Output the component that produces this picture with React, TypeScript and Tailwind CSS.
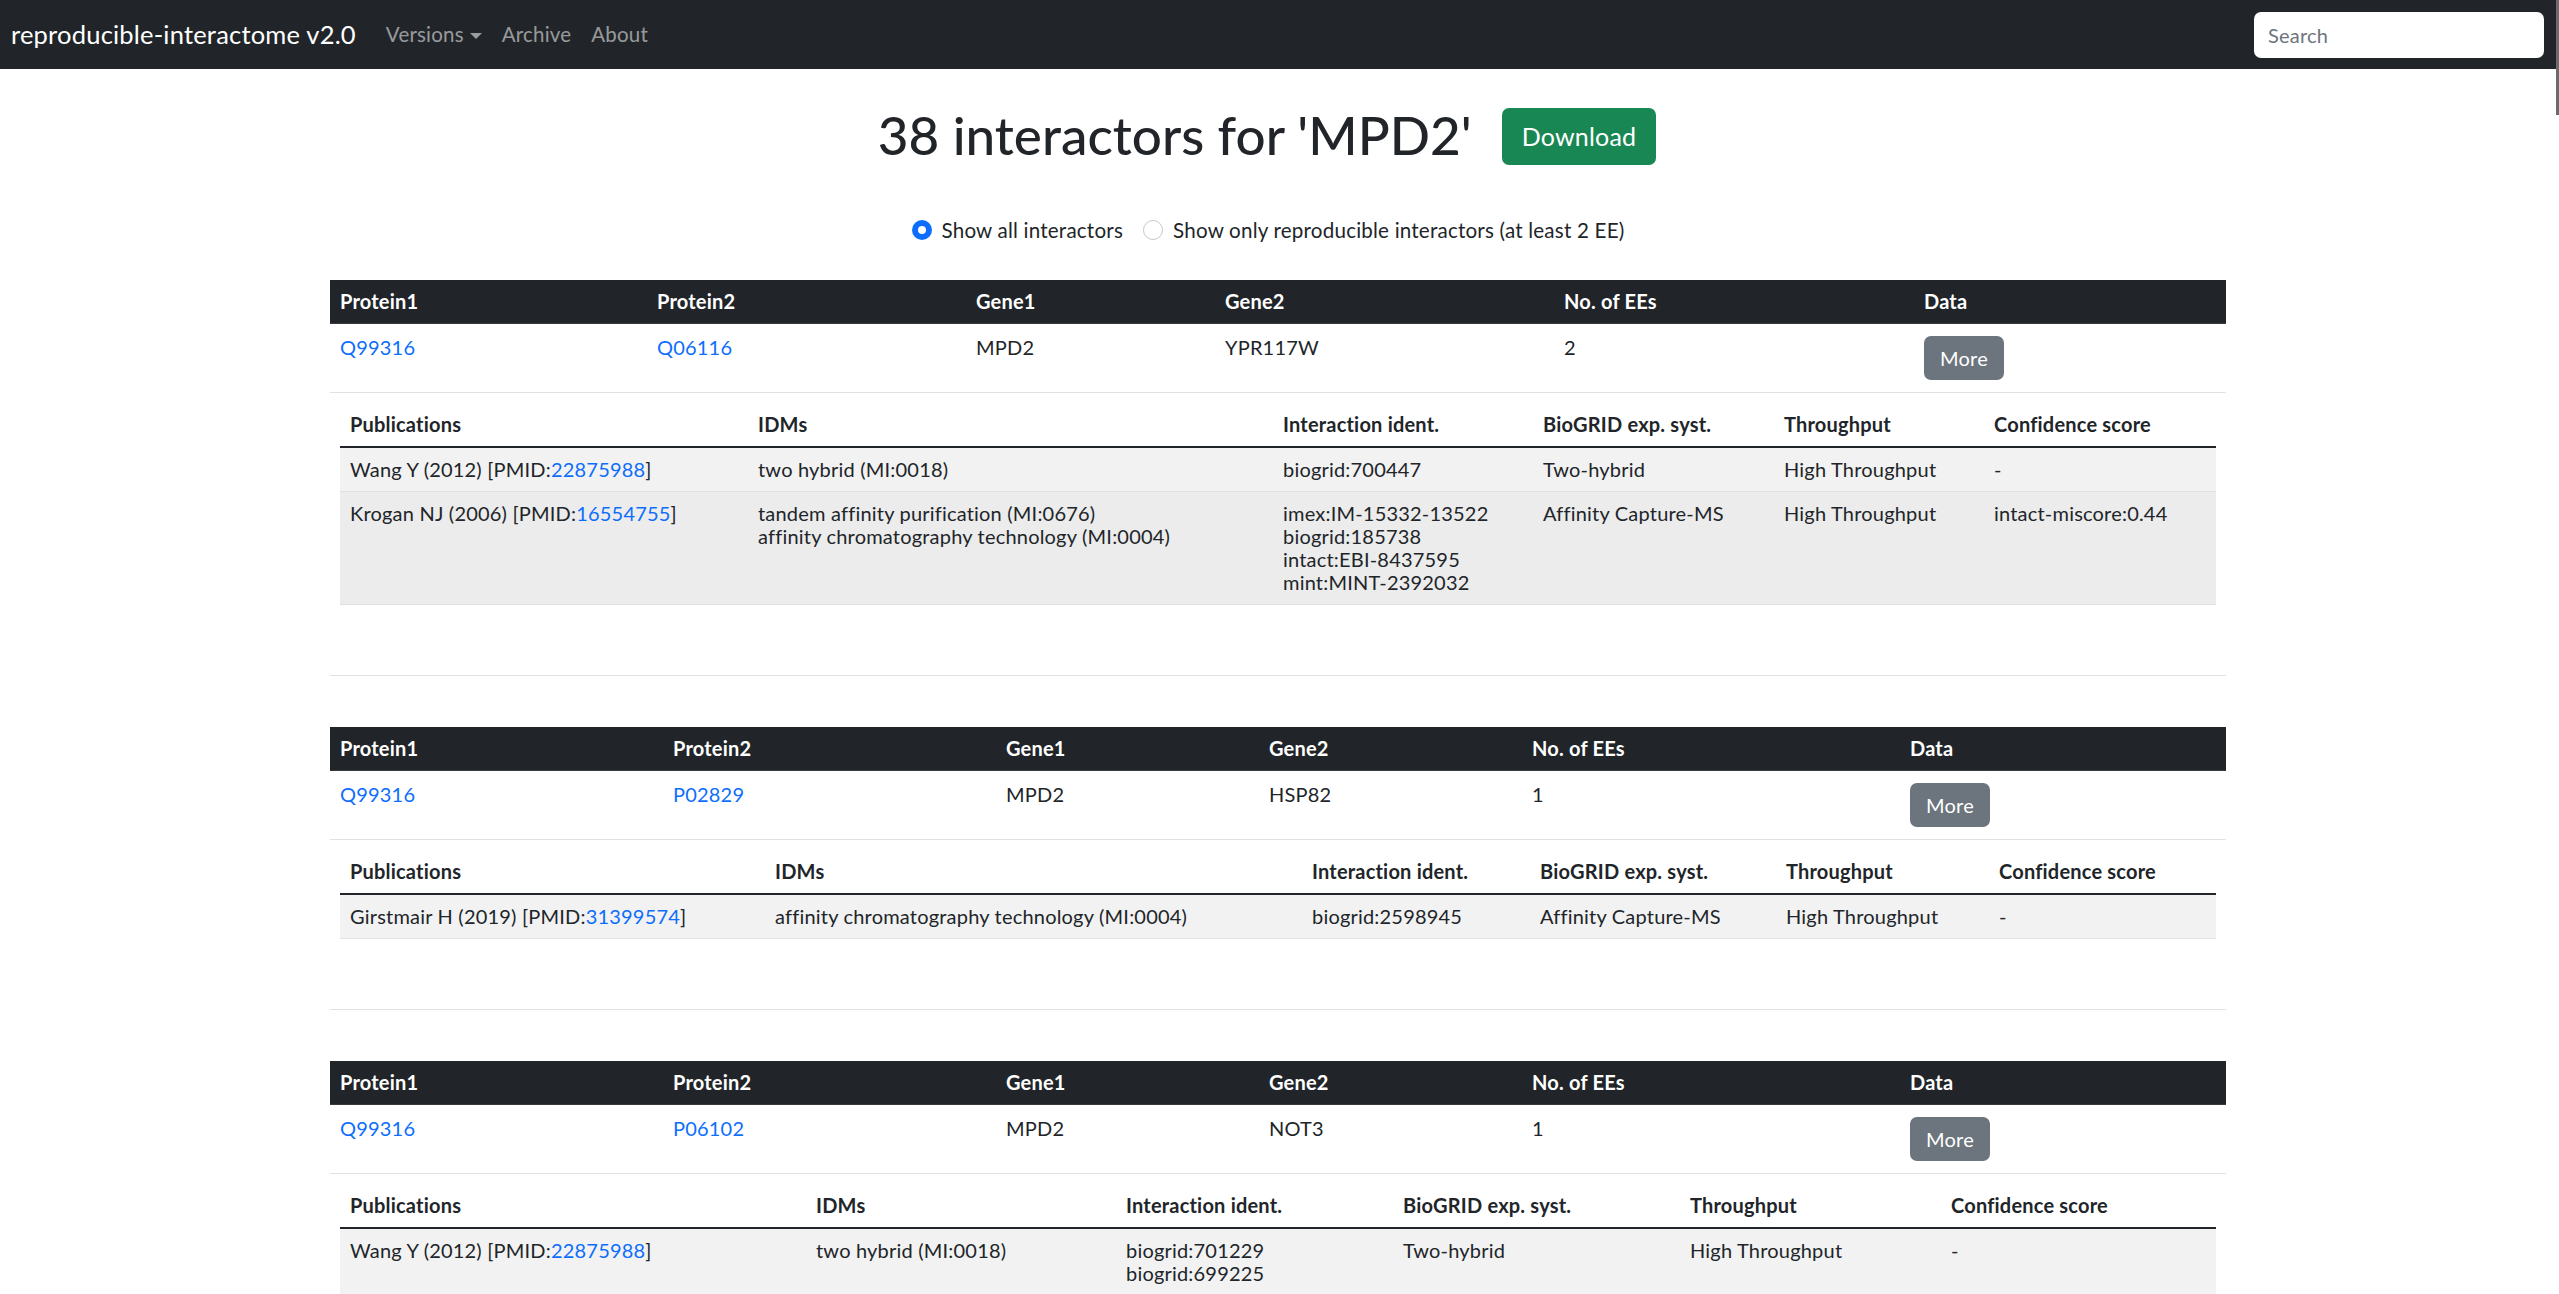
import React from "react";

type InnerRow = {
  pub: string;
  pmid: string;
  idms: string[];
  ids: string[];
  exp: string;
  tp: string;
  conf: string;
  bg: string;
};

type Entry = {
  p1: string;
  p2: string;
  g1: string;
  g2: string;
  ees: string;
  outerCols: string[];
  innerCols: string[];
  rows: InnerRow[];
};

const entries: Entry[] = [
  {
    p1: "Q99316",
    p2: "Q06116",
    g1: "MPD2",
    g2: "YPR117W",
    ees: "2",
    outerCols: ["w-[317px]", "w-[319px]", "w-[249px]", "w-[339px]", "w-[360px]", "w-[312px]"],
    innerCols: ["w-[408px]", "w-[525px]", "w-[260px]", "w-[241px]", "w-[210px]", "w-[232px]"],
    rows: [
      {
        pub: "Wang Y (2012)",
        pmid: "22875988",
        idms: ["two hybrid (MI:0018)"],
        ids: ["biogrid:700447"],
        exp: "Two-hybrid",
        tp: "High Throughput",
        conf: "-",
        bg: "bg-[#f2f2f2]",
      },
      {
        pub: "Krogan NJ (2006)",
        pmid: "16554755",
        idms: ["tandem affinity purification (MI:0676)", "affinity chromatography technology (MI:0004)"],
        ids: ["imex:IM-15332-13522", "biogrid:185738", "intact:EBI-8437595", "mint:MINT-2392032"],
        exp: "Affinity Capture-MS",
        tp: "High Throughput",
        conf: "intact-miscore:0.44",
        bg: "bg-[#ececec]",
      },
    ],
  },
  {
    p1: "Q99316",
    p2: "P02829",
    g1: "MPD2",
    g2: "HSP82",
    ees: "1",
    outerCols: ["w-[333px]", "w-[333px]", "w-[263px]", "w-[263px]", "w-[378px]", "w-[326px]"],
    innerCols: ["w-[425px]", "w-[537px]", "w-[228px]", "w-[246px]", "w-[213px]", "w-[227px]"],
    rows: [
      {
        pub: "Girstmair H (2019)",
        pmid: "31399574",
        idms: ["affinity chromatography technology (MI:0004)"],
        ids: ["biogrid:2598945"],
        exp: "Affinity Capture-MS",
        tp: "High Throughput",
        conf: "-",
        bg: "bg-[#f2f2f2]",
      },
    ],
  },
  {
    p1: "Q99316",
    p2: "P06102",
    g1: "MPD2",
    g2: "NOT3",
    ees: "1",
    outerCols: ["w-[333px]", "w-[333px]", "w-[263px]", "w-[263px]", "w-[378px]", "w-[326px]"],
    innerCols: ["w-[466px]", "w-[310px]", "w-[277px]", "w-[287px]", "w-[261px]", "w-[275px]"],
    rows: [
      {
        pub: "Wang Y (2012)",
        pmid: "22875988",
        idms: ["two hybrid (MI:0018)"],
        ids: ["biogrid:701229", "biogrid:699225"],
        exp: "Two-hybrid",
        tp: "High Throughput",
        conf: "-",
        bg: "bg-[#f2f2f2]",
      },
    ],
  },
];

const outerHeads = ["Protein1", "Protein2", "Gene1", "Gene2", "No. of EEs", "Data"];
const innerHeads = ["Publications", "IDMs", "Interaction ident.", "BioGRID exp. syst.", "Throughput", "Confidence score"];

function Lines({ items }: { items: string[] }) {
  return (
    <>
      {items.map((t, i) => (
        <div key={i}>{t}</div>
      ))}
    </>
  );
}

function InteractorTable({ e }: { e: Entry }) {
  const tdOuter = "px-[10px] pt-[12px] pb-[12px] align-top leading-[23px] border-b border-[#dee2e6]";
  const tdInner = "px-[10px] py-[10px] align-top leading-[23px] border-b border-[#dee2e6]";
  return (
    <table className="w-[1896px] table-fixed border-collapse mb-[51px]">
      <thead>
        <tr>
          {outerHeads.map((h, i) => (
            <th
              key={h}
              className={`${e.outerCols[i]} bg-[#212529] text-white font-bold text-left px-[10px] py-[10px] leading-[23px] border-b border-[#373b3e]`}
            >
              {h}
            </th>
          ))}
        </tr>
      </thead>
      <tbody>
        <tr>
          <td className={tdOuter}>
            <a className="text-[#0d6efd]" href="#">{e.p1}</a>
          </td>
          <td className={tdOuter}>
            <a className="text-[#0d6efd]" href="#">{e.p2}</a>
          </td>
          <td className={tdOuter}>{e.g1}</td>
          <td className={tdOuter}>{e.g2}</td>
          <td className={tdOuter}>{e.ees}</td>
          <td className={tdOuter}>
            <button className="h-[44px] w-[80px] rounded-[7px] bg-[#6c757d] text-white leading-[30px] text-[20px]">
              More
            </button>
          </td>
        </tr>
        <tr>
          <td colSpan={6} className="px-[10px] pt-[10px] pb-[70px] border-b border-[#dee2e6]">
            <table className="w-full table-fixed border-collapse">
              <thead>
                <tr>
                  {innerHeads.map((h, i) => (
                    <th
                      key={h}
                      className={`${e.innerCols[i]} text-left font-bold px-[10px] py-[10px] leading-[23px] border-b-2 border-[#212529]`}
                    >
                      {h}
                    </th>
                  ))}
                </tr>
              </thead>
              <tbody>
                {e.rows.map((r, i) => (
                  <tr key={i} className={r.bg}>
                    <td className={tdInner}>
                      {r.pub} [PMID:<a className="text-[#0d6efd]" href="#">{r.pmid}</a>]
                    </td>
                    <td className={tdInner}>
                      <Lines items={r.idms} />
                    </td>
                    <td className={tdInner}>
                      <Lines items={r.ids} />
                    </td>
                    <td className={tdInner}>{r.exp}</td>
                    <td className={tdInner}>{r.tp}</td>
                    <td className={tdInner}>{r.conf}</td>
                  </tr>
                ))}
              </tbody>
            </table>
          </td>
        </tr>
      </tbody>
    </table>
  );
}

function Radio({ checked, label }: { checked: boolean; label: string }) {
  return (
    <label className="flex items-center gap-[10px] mr-[20px]">
      {checked ? (
        <span className="flex h-[20px] w-[20px] items-center justify-center rounded-full bg-[#0d6efd]">
          <span className="h-[8px] w-[8px] rounded-full bg-white" />
        </span>
      ) : (
        <span className="h-[20px] w-[20px] rounded-full border border-[#c4c8cc] bg-white" />
      )}
      <span className="text-[20.6px] leading-[30px]">{label}</span>
    </label>
  );
}

export default function App() {
  return (
    <div className="flex min-h-[1294px] w-full bg-white font-['Lato',sans-serif] text-[20px] tracking-[0.2px] text-[#212529]">
      <div className="flex-1 min-w-0">
        <nav className="flex h-[69px] items-center bg-[#212529] pl-[11px] pr-[12px]">
          <span className="mr-[20px] text-[25.5px] text-white">reproducible-interactome v2.0</span>
          <span className="flex items-center gap-[6px] px-[10px] text-[20.5px] text-[rgba(255,255,255,0.55)]">
            Versions
            <span className="mt-[2px] h-0 w-0 border-x-[6px] border-t-[6px] border-x-transparent border-t-[rgba(255,255,255,0.55)]" />
          </span>
          <span className="px-[10px] text-[20.5px] text-[rgba(255,255,255,0.55)]">Archive</span>
          <span className="px-[10px] text-[20.5px] text-[rgba(255,255,255,0.55)]">About</span>
          <div className="flex-1" />
          <div className="flex h-[46px] w-[290px] items-center rounded-[7px] bg-white px-[14px] text-[#6c757d]">
            Search
          </div>
        </nav>

        <main className="flex flex-col items-center">
          <div className="mt-[35px] flex items-center gap-[30px] pr-[22px]">
            <h1 className="text-[53px] font-medium leading-[60px] tracking-normal">38 interactors for 'MPD2'</h1>
            <button className="mt-[4px] h-[57px] rounded-[7px] bg-[#198754] px-[20px] text-[25px] text-white">
              Download
            </button>
          </div>

          <div className="mt-[50px] flex items-center">
            <Radio checked={true} label="Show all interactors" />
            <Radio checked={false} label="Show only reproducible interactors (at least 2 EE)" />
          </div>

          <div className="mt-[35px]">
            {entries.map((e, i) => (
              <InteractorTable key={i} e={e} />
            ))}
          </div>
        </main>
      </div>
      <div className="flex w-[3px] flex-col bg-white">
        <div className="h-[115px] bg-[#6b6b6b]" />
      </div>
    </div>
  );
}
